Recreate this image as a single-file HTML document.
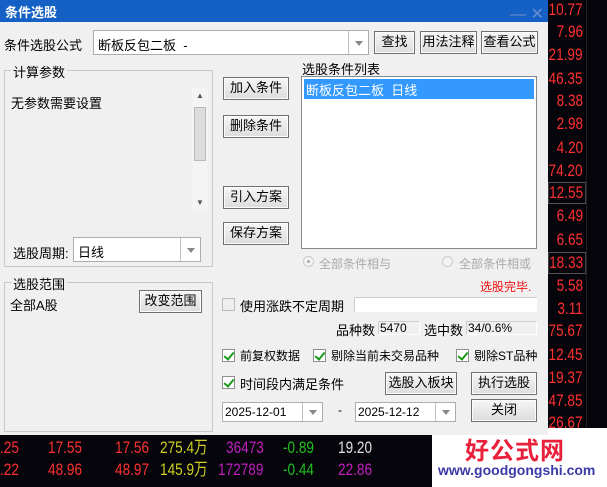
<!DOCTYPE html>
<html><head><meta charset="utf-8"><style>
*{margin:0;padding:0;box-sizing:border-box}
body{width:607px;height:487px;background:#05050b;position:relative;overflow:hidden;font-family:"Liberation Sans","Noto Sans CJK SC",sans-serif;font-size:12px;color:#000}
.a{position:absolute;white-space:nowrap}
.num{position:absolute;right:24px;color:#ff3030;font-size:17px;font-family:"Liberation Sans",sans-serif;line-height:20px;transform:scaleX(0.8);transform-origin:right center}
.bt span{transform:scaleX(0.8);transform-origin:left center}
.dlg{position:absolute;left:0;top:0;width:548px;height:435px;background:#f0f0f0}
.tb{position:absolute;left:0;top:0;width:548px;height:22px;background:#1560c4;color:#fff;font-weight:bold;font-size:13px;padding:2px 5px}
.btn{position:absolute;background:linear-gradient(#f6f6f6,#dcdcdc);border:1px solid #707070;box-shadow:inset 0 0 0 1px #fcfcfc;text-align:center;font-size:13px;line-height:20px}
.box{position:absolute;background:#fff;border:1px solid #abadb3}
.grp{position:absolute;border:1px solid #c8c8c8}
.lg{position:absolute;background:#f0f0f0;padding:0 2px;font-size:13px;top:-9px;left:6px}
.cb{position:absolute;width:13px;height:13px;border:1px solid #8f8f8f;background:#fff}
.cb.c::after{content:"";position:absolute;left:3px;top:0px;width:4px;height:8px;border:solid #1a9a1a;border-width:0 2px 2px 0;transform:rotate(40deg)}
.dd{position:absolute;top:0;right:0;width:20px;height:100%;border-left:1px solid #c0c0c0}
.dd::after{content:"";position:absolute;left:6px;top:50%;margin-top:-2px;border:4px solid transparent;border-top:5px solid #888;border-bottom:0}
.t13{font-size:13px}
</style></head><body>
<div class="num" style="top:0">10.77</div>
<div class="num" style="top:22px">7.96</div>
<div class="num" style="top:45px">21.99</div>
<div class="num" style="top:69px">46.35</div>
<div class="num" style="top:91px">8.38</div>
<div class="num" style="top:114px">2.98</div>
<div class="num" style="top:138px">4.20</div>
<div class="num" style="top:161px">74.20</div>
<div class="num" style="top:182px;border:1px solid #555;right:21px;padding-right:2px">12.55</div>
<div class="num" style="top:206px">6.49</div>
<div class="num" style="top:230px">6.65</div>
<div class="num" style="top:252px;border:1px solid #555;right:21px;padding-right:2px">18.33</div>
<div class="num" style="top:276px">5.58</div>
<div class="num" style="top:299px">3.11</div>
<div class="num" style="top:321px">75.67</div>
<div class="num" style="top:345px">12.45</div>
<div class="num" style="top:368px">19.37</div>
<div class="num" style="top:391px">47.85</div>
<div class="num" style="top:413px">26.67</div>
<div class="a" style="left:586px;top:0;width:1px;height:430px;background:#222"></div>

<div class="a bt" style="top:437px;left:0;width:432px;font-size:17px;line-height:22px;font-family:'Liberation Sans','Noto Sans CJK SC',sans-serif">
<span class="a" style="left:0;color:#ff3030">.25</span><span class="a" style="left:48px;color:#ff3030">17.55</span><span class="a" style="left:115px;color:#ff3030">17.56</span><span class="a" style="left:160px;color:#d0d020">275.4万</span><span class="a" style="left:226px;color:#c020c0">36473</span><span class="a" style="left:283px;color:#20c020">-0.89</span><span class="a" style="left:338px;color:#e0e0e0">19.20</span>
<span class="a" style="left:0;top:22px;color:#ff3030">.22</span><span class="a" style="left:48px;top:22px;color:#ff3030">48.96</span><span class="a" style="left:115px;top:22px;color:#ff3030">48.97</span><span class="a" style="left:160px;top:22px;color:#d0d020">145.9万</span><span class="a" style="left:218px;top:22px;color:#c020c0">172789</span><span class="a" style="left:283px;top:22px;color:#20c020">-0.44</span><span class="a" style="left:338px;top:22px;color:#c020c0">22.86</span>
</div>
<div class="a" style="left:432px;top:428px;width:175px;height:59px;background:#fff">
<div class="a" style="left:33px;top:3px;color:#e8203a;font-size:24px;font-weight:bold;letter-spacing:1px">好公式网</div>
<div class="a" style="left:6px;top:34px;color:#3a3aa8;font-size:14px;font-weight:bold">www.goodgongshi.com</div>
</div>

<div class="dlg">
<div class="tb">条件选股</div>
<div class="a" style="left:510px;top:4px;color:#6a8fd0;font-size:16px">—&nbsp;✕</div>
<div class="a t13" style="left:4px;top:35px">条件选股公式</div>
<div class="box" style="left:93px;top:30px;width:276px;height:25px"><span class="a t13" style="left:4px;top:4px">断板反包二板 &nbsp;-</span><div class="dd"></div></div>
<div class="btn" style="left:374px;top:31px;width:41px;height:23px">查找</div>
<div class="btn" style="left:420px;top:31px;width:57px;height:23px">用法注释</div>
<div class="btn" style="left:481px;top:31px;width:57px;height:23px">查看公式</div>

<div class="grp" style="left:4px;top:70px;width:209px;height:197px"><span class="lg">计算参数</span>
<span class="a t13" style="left:6px;top:22px">无参数需要设置</span>
<div class="a" style="left:187px;top:17px;width:16px;height:123px;background:#f4f4f4">
<div class="a" style="left:2px;top:19px;width:12px;height:54px;background:#dcdcdc;border:1px solid #bbb"></div>
<div class="a" style="left:4px;top:3px;font-size:8px;color:#555">▲</div><div class="a" style="left:4px;top:110px;font-size:8px;color:#555">▼</div></div>
<span class="a t13" style="left:8px;top:172px">选股周期:</span>
<div class="box" style="left:68px;top:166px;width:128px;height:25px"><span class="a t13" style="left:4px;top:4px">日线</span><div class="dd"></div></div>
</div>

<div class="grp" style="left:4px;top:282px;width:209px;height:150px"><span class="lg">选股范围</span>
<span class="a t13" style="left:5px;top:12px">全部A股</span>
<div class="btn" style="left:134px;top:7px;width:63px;height:23px">改变范围</div>
</div>

<div class="btn" style="left:223px;top:77px;width:66px;height:23px">加入条件</div>
<div class="btn" style="left:223px;top:115px;width:66px;height:23px">删除条件</div>
<div class="btn" style="left:223px;top:186px;width:66px;height:23px">引入方案</div>
<div class="btn" style="left:223px;top:222px;width:66px;height:23px">保存方案</div>

<div class="a t13" style="left:302px;top:59px">选股条件列表</div>
<div class="box" style="left:301px;top:76px;width:236px;height:173px;border-color:#828790"><div class="a t13" style="left:2px;top:2px;width:230px;height:20px;background:#3399ff;color:#fff;padding:1px 2px">断板反包二板 &nbsp;日线</div></div>

<div class="a" style="left:303px;top:256px;width:11px;height:11px;border-radius:50%;border:1px solid #ccc;background:#f4f4f4"><div class="a" style="left:3px;top:3px;width:3px;height:3px;border-radius:50%;background:#aaa"></div></div>
<span class="a" style="left:319px;top:255px;color:#aaa">全部条件相与</span>
<div class="a" style="left:442px;top:256px;width:11px;height:11px;border-radius:50%;border:1px solid #ccc;background:#f4f4f4"></div>
<span class="a" style="left:459px;top:255px;color:#aaa">全部条件相或</span>
<span class="a" style="left:480px;top:278px;color:#f01010">选股完毕.</span>

<div class="cb" style="left:222px;top:298px;border-color:#bbb;background:#eee"></div>
<span class="a t13" style="left:240px;top:296px">使用涨跌不定周期</span>
<div class="a" style="left:354px;top:297px;width:183px;height:15px;background:#fff;border:1px solid #ccc;border-right:0;border-bottom:0"></div>
<span class="a t13" style="left:336px;top:320px">品种数</span>
<div class="a" style="left:378px;top:321px;width:42px;height:14px;border:1px solid #ccc;border-right-color:#fff;border-bottom-color:#fff;font-size:12px;line-height:13px;padding-left:1px">5470</div>
<span class="a t13" style="left:424px;top:320px">选中数</span>
<div class="a" style="left:466px;top:321px;width:71px;height:14px;border:1px solid #ccc;border-right-color:#fff;border-bottom-color:#fff;font-size:12px;line-height:13px;padding-left:1px">34/0.6%</div>

<div class="cb c" style="left:222px;top:349px"></div><span class="a" style="left:240px;top:347px">前复权数据</span>
<div class="cb c" style="left:313px;top:349px"></div><span class="a" style="left:331px;top:347px">剔除当前未交易品种</span>
<div class="cb c" style="left:456px;top:349px"></div><span class="a" style="left:474px;top:347px">剔除ST品种</span>
<div class="cb c" style="left:222px;top:376px"></div><span class="a t13" style="left:240px;top:374px">时间段内满足条件</span>
<div class="btn" style="left:385px;top:372px;width:72px;height:23px">选股入板块</div>
<div class="btn" style="left:471px;top:372px;width:66px;height:23px">执行选股</div>
<div class="box" style="left:222px;top:402px;width:101px;height:20px"><span class="a" style="left:2px;top:2px">2025-12-01</span><div class="dd"></div></div>
<span class="a" style="left:338px;top:403px">-</span>
<div class="box" style="left:355px;top:402px;width:101px;height:20px"><span class="a" style="left:2px;top:2px">2025-12-12</span><div class="dd"></div></div>
<div class="btn" style="left:471px;top:399px;width:66px;height:23px">关闭</div>
</div>
</body></html>
